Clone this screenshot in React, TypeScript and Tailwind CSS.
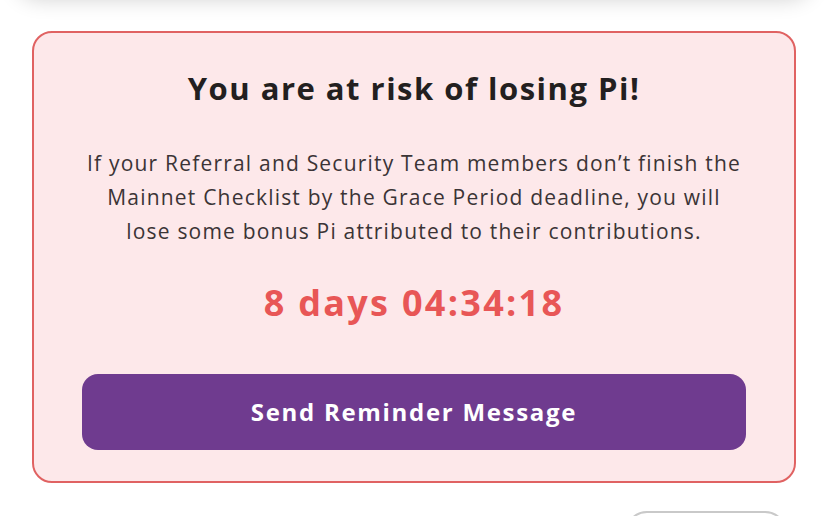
import React from 'react';

const font = { fontFamily: '"Open Sans", "Noto Sans", sans-serif' };

function RiskCard(): JSX.Element {
  return (
    <div className="mt-[31px] h-[452px] rounded-[20px] border-2 border-[#e06262] bg-[#fde8ea] px-[48px] pt-[37px] text-center">
      <h2 className="text-[31px] font-bold leading-[36px] tracking-[1.5px] text-[#231f20]">You are at risk of losing Pi!</h2>
      <p className="mt-[40px] text-[21px] leading-[34px] tracking-[1.2px] text-[#3b3436]">
        If your Referral and Security Team members don’t finish the
        <br />
        Mainnet Checklist by the Grace Period deadline, you will
        <br />
        lose some bonus Pi attributed to their contributions.
      </p>
      <div className="mt-[33px] text-[36px] font-bold leading-[44px] tracking-[2.3px] text-[#e85656]">8 days 04:34:18</div>
      <button className="mt-[49px] h-[76px] w-full rounded-[16px] bg-[#6f3b8f] text-[24px] font-bold tracking-[1.7px] text-white">
        Send Reminder Message
      </button>
    </div>
  );
}

export default function App(): JSX.Element {
  return (
    <div className="h-[516px] w-[828px] overflow-hidden bg-white px-[32px]" style={font}>
      <div className="-mx-[14px] -mt-[48px] h-[40px] rounded-[22px] bg-white shadow-[0_6px_22px_rgba(0,0,0,0.2)]" />
      <div className="pt-[8px]">
        <RiskCard />
      </div>
      <div className="mt-[28px] flex justify-end pr-[9px]">
        <div className="h-[44px] w-[162px] rounded-full border-2 border-[#c9c9c9] bg-white" />
      </div>
    </div>
  );
}
